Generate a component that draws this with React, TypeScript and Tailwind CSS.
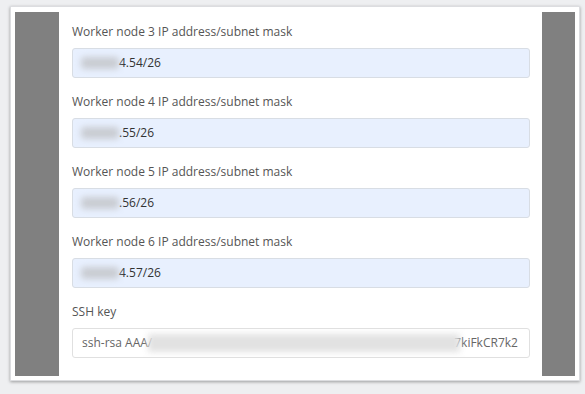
import React from "react";

const ips = [
  { n: 3, tail: "4.54/26" },
  { n: 4, tail: ".55/26" },
  { n: 5, tail: ".56/26" },
  { n: 6, tail: "4.57/26" },
];

export default function App() {
  return (
    <div
      className="w-[585px] h-[394px] bg-[#eeeff1] pt-[6px] pl-[10px] overflow-hidden"
      style={{ fontFamily: '"Open Sans", "Noto Sans", sans-serif' }}
    >
      <div className="w-[570px] h-[375px] bg-white border border-[#dcdde0] shadow-[0_1px_3px_rgba(0,0,0,0.35)] flex pt-[5px] pl-[4px] pr-[4px] pb-[4px]">
        <div className="w-[44px] bg-[#808080] shrink-0" />
        <div className="flex-1 flex flex-col pt-[10px] pl-[13px] pr-[12px]">
          {ips.map((ip) => (
            <div key={ip.n} className="mb-[14px]">
              <div className="h-[20px] leading-[20px] text-[12px] text-[#555]">
                Worker node {ip.n} IP address/subnet mask
              </div>
              <div className="mt-[6px] h-[30px] rounded-[3px] border border-[#d8dde4] bg-[#e8f0fe] flex items-center pl-[8px] text-[12px] text-[#333] overflow-hidden">
                <span className="inline-block w-[38px] h-[12px] rounded-[4px] bg-[#c9ccd2] blur-[3px]" />
                <span>{ip.tail}</span>
              </div>
            </div>
          ))}
          <div>
            <div className="h-[20px] leading-[20px] text-[12px] text-[#555]">SSH key</div>
            <div className="mt-[6px] h-[30px] rounded-[3px] border border-[#e0e0e0] bg-white flex items-center pl-[9px] pr-[2px] text-[12px] text-[#666] overflow-hidden whitespace-nowrap">
              <span>ssh-rsa AAA/</span>
              <span className="inline-block shrink-0 w-[312px] h-[18px] bg-[#e2e2e2] blur-[3px] -ml-[4px]" />
              <span className="-ml-[6px]">7kiFkCR7k2</span>
            </div>
          </div>
        </div>
        <div className="w-[33px] bg-[#808080] shrink-0" />
      </div>
    </div>
  );
}
